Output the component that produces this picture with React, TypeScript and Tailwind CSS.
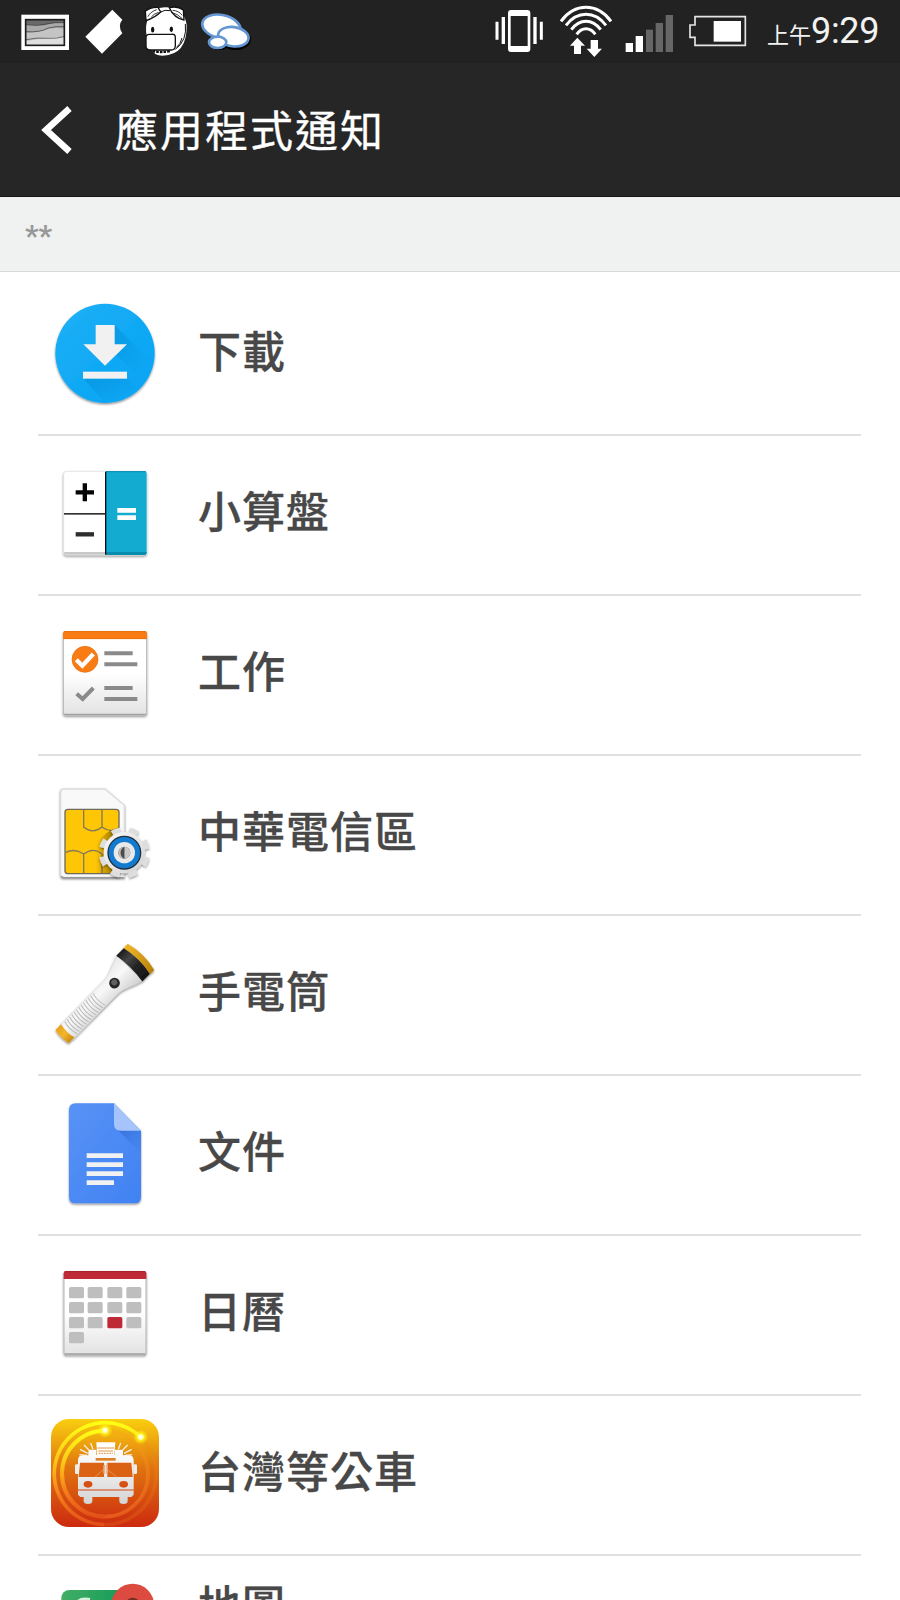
import React from 'react';

interface AppItem {
  id: number;
  name: string;
  icon: React.ReactNode;
  twoLine?: boolean;
}

const IconShadow = ({ id }: { id: string }) => (
  <filter id={id} x="-20%" y="-20%" width="140%" height="140%">
    <feDropShadow dx="0" dy="4" stdDeviation="3.500" floodColor="#000" floodOpacity="0.450" />
  </filter>
);

const DownloadIcon = () => (
  <svg viewBox="63 27 324 324" className="w-[108px] h-[108px] overflow-visible">
    <defs>
      <IconShadow id="dl-shadow" />
      <linearGradient id="dl-bg" x1="0" y1="0" x2="1" y2="1">
        <stop offset="0" stopColor="#1fb0f6" />
        <stop offset="1" stopColor="#03a3f4" />
      </linearGradient>
      <linearGradient id="dl-long" x1="0" y1="0" x2="1" y2="1">
        <stop offset="0" stopColor="#0288d1" stopOpacity="0.5" />
        <stop offset="0.800" stopColor="#0288d1" stopOpacity="0" />
      </linearGradient>
    </defs>
    <circle cx="225" cy="190" r="149" fill="url(#dl-bg)" filter="url(#dl-shadow)" />
    <path d="M254 105 L363 214 L340 270 L254 190Z" fill="url(#dl-long)" />
    <path d="M160 265 H291 L320 295 L225 339Z" fill="url(#dl-long)" />
    <path d="M197 105 H254 V163 H291 L225 227 L160 163 H197Z" fill="#f1f1f1" />
    <rect x="159" y="245" width="132" height="21" fill="#f1f1f1" />
  </svg>
);

const CalculatorIcon = () => (
  <svg viewBox="63 27 324 324" className="w-[108px] h-[108px] overflow-visible">
    <defs>
      <IconShadow id="calc-shadow" />
    </defs>
    <rect x="101" y="64" width="249" height="251" rx="8" fill="#fff" stroke="#ddd" strokeWidth="2" filter="url(#calc-shadow)" />
    <rect x="102" y="306" width="125" height="8" rx="3" fill="#c9c9c9" />
    <path d="M228 64 H342 Q350 64 350 72 V307 Q350 315 342 315 H228Z" fill="#13abcf" />
    <path d="M228 306 H350 Q350 315 342 315 H228Z" fill="#078cae" />
    <path d="M228 65 H348" stroke="#078cae" strokeWidth="3" />
    <rect x="225" y="65" width="4" height="249" fill="#111" />
    <rect x="102" y="189" width="124" height="5" fill="#333" />
    <path d="M137 127 H192 M164.500 100 V154" stroke="#050505" strokeWidth="13" />
    <path d="M137 253 H192" stroke="#2e2e2e" strokeWidth="13" />
    <path d="M262 181 H318 M262 203 H318" stroke="#fff" strokeWidth="14" />
  </svg>
);

const TasksIcon = () => (
  <svg viewBox="63 27 324 324" className="w-[108px] h-[108px] overflow-visible">
    <defs>
      <IconShadow id="task-shadow" />
      <linearGradient id="paper" x1="0" y1="0" x2="0" y2="1">
        <stop offset="0.500" stopColor="#fff" />
        <stop offset="1" stopColor="#e2e2e2" />
      </linearGradient>
    </defs>
    <rect x="100" y="65" width="250" height="250" rx="6" fill="url(#paper)" stroke="#b5b5b5" strokeWidth="3" filter="url(#task-shadow)" />
    <path d="M102 313 H348" stroke="#a2a2a2" strokeWidth="4" />
    <path d="M99 87 V70 Q99 63 106 63 H344 Q351 63 351 70 V87Z" fill="#f97b14" />
    <path d="M102 65 H348 M100 86 H350" stroke="#e56b08" strokeWidth="2" />
    <circle cx="165" cy="148" r="39" fill="#f97b14" stroke="#e56b08" strokeWidth="2" />
    <path d="M139 149 L157 167 L190 132" stroke="#fff" strokeWidth="13" fill="none" />
    <path d="M140 251 L158 267 L190 234" stroke="#8a8a8a" strokeWidth="12" fill="none" />
    <path d="M223 130 H308 M223 163 H322 M223 234 H308 M223 267 H322" stroke="#8a8a8a" strokeWidth="12" />
  </svg>
);

const SimIcon = () => (
  <svg viewBox="63 27 324 324" className="w-[108px] h-[108px] overflow-visible">
    <defs>
      <IconShadow id="sim-shadow" />
      <linearGradient id="sim-dark" x1="0" y1="0" x2="1" y2="0">
        <stop offset="0.200" stopColor="#4a3500" stopOpacity="0" />
        <stop offset="1" stopColor="#4a3500" stopOpacity="0.700" />
      </linearGradient>
      <linearGradient id="gear-fill" x1="0" y1="0" x2="1" y2="1">
        <stop offset="0" stopColor="#fafafa" />
        <stop offset="1" stopColor="#d2d2d2" />
      </linearGradient>
    </defs>
    <path d="M101 57 H225 L283 106 V322 H101 Q92 322 92 313 V66 Q92 57 101 57Z" fill="#f9f9f9" stroke="#dcdcdc" strokeWidth="4" filter="url(#sim-shadow)" />
    <path d="M94 318 Q95 323 102 323 H282" fill="none" stroke="#999" strokeWidth="4" />
    <rect x="105" y="118" width="162" height="193" rx="9" fill="#ffc605" stroke="#6e6a5d" strokeWidth="4" />
    <path d="M161 119 V171 Q188 194 216 171 V119 M216 171 Q235 185 262 181 M106 248 Q133 233 161 252 V310 M161 252 Q190 230 216 252 V310" fill="none" stroke="#84795b" strokeWidth="4" />
    <path d="M180 310 Q182 195 267 172 V302 Q267 310 259 310Z" fill="url(#sim-dark)" />
    <g filter="url(#sim-shadow)">
      <circle cx="283" cy="248" r="68" fill="none" stroke="#dedede" strokeWidth="17" strokeDasharray="26 27.400" transform="rotate(11.500 283 248)" />
      <circle cx="283" cy="248" r="62" fill="url(#gear-fill)" />
    </g>
    <circle cx="283" cy="248" r="49" fill="#127bd0" stroke="#212f3e" strokeWidth="4" />
    <circle cx="283" cy="248" r="32" fill="#e9e9e9" />
    <circle cx="283" cy="248" r="18" fill="#555" />
    <path d="M283 230 A18 18 0 0 1 283 266Z" fill="#c9c9c9" />
    <path d="M283 230 A18 18 0 0 0 283 266Z" fill="#bdbdbd" />
    <path d="M283 230 A20 20 0 0 1 283 266Z" fill="#4c4c4c" transform="rotate(180 283 248)" />
  </svg>
);

const ribs = [38, 48, 58, 68, 78, 88, 98, 108, 118, 128, 138, 148, 158];

const FlashlightIcon = () => (
  <svg viewBox="63 57 324 324" className="w-[108px] h-[108px] overflow-visible">
    <defs>
      <IconShadow id="torch-shadow" />
      <linearGradient id="torch-body" x1="0" y1="0" x2="0" y2="1">
        <stop offset="0" stopColor="#e6e6e6" />
        <stop offset="0.400" stopColor="#f8f8f8" />
        <stop offset="1" stopColor="#cfcfcf" />
      </linearGradient>
      <linearGradient id="torch-gold" x1="0" y1="0" x2="0" y2="1">
        <stop offset="0" stopColor="#f0b428" />
        <stop offset="0.250" stopColor="#e2aa25" />
        <stop offset="1" stopColor="#b98108" />
      </linearGradient>
      <linearGradient id="torch-tail" x1="0" y1="0" x2="0" y2="1">
        <stop offset="0" stopColor="#e5a51c" />
        <stop offset="0.500" stopColor="#f3b52c" />
        <stop offset="1" stopColor="#c98f14" />
      </linearGradient>
      <linearGradient id="torch-band" x1="0" y1="0" x2="0" y2="1">
        <stop offset="0" stopColor="#1c1c1c" />
        <stop offset="0.300" stopColor="#454545" />
        <stop offset="0.600" stopColor="#222" />
        <stop offset="1" stopColor="#161616" />
      </linearGradient>
    </defs>
    <g filter="url(#torch-shadow)">
      <g transform="translate(96 350) rotate(-45.300)">
        <path d="M18 -29 H208 C235 -29 255 -46 289 -54 V54 C255 46 235 29 208 29 H18Z" fill="url(#torch-body)" stroke="#bdbdbd" strokeWidth="1" />
        <path d="M0 -28 H25 Q17 0 25 28 H0 Q-6 0 0 -28Z" fill="url(#torch-tail)" />
        {ribs.map((x) => (
          <path key={x} d={`M${x} -26 Q${x - 8} 0 ${x} 26`} fill="none" stroke="#b8b8b8" strokeWidth="3" />
        ))}
        <path d="M287 -55 H320 Q332 0 320 55 H287 Q297 0 287 -55Z" fill="url(#torch-band)" />
        <path d="M319 -56 H337 Q352 0 337 56 H319 Q332 0 319 -56Z" fill="url(#torch-gold)" />
        <circle cx="225" cy="-1" r="16" fill="#262626" />
        <circle cx="226" cy="-3" r="9" fill="#606060" />
      </g>
    </g>
  </svg>
);

const DocsIcon = () => (
  <svg viewBox="63 57 324 324" className="w-[108px] h-[108px] overflow-visible">
    <defs>
      <IconShadow id="docs-shadow" />
      <linearGradient id="docs-bg" x1="0" y1="0" x2="1" y2="1">
        <stop offset="0" stopColor="#5892f6" />
        <stop offset="1" stopColor="#4082f2" />
      </linearGradient>
      <linearGradient id="docs-fold" x1="0" y1="0" x2="1" y2="1">
        <stop offset="0" stopColor="#2b66cf" stopOpacity="0.700" />
        <stop offset="1" stopColor="#3a78e0" stopOpacity="0.100" />
      </linearGradient>
    </defs>
    <path d="M137 70 H252 L333 152 V350 Q333 370 313 370 H137 Q117 370 117 350 V90 Q117 70 137 70Z" fill="url(#docs-bg)" filter="url(#docs-shadow)" />
    <path d="M260 147 L333 152 V218Z" fill="url(#docs-fold)" />
    <path d="M252 70 L333 152 H272 Q252 152 252 132Z" fill="#a6c4fb" />
    <path d="M170 227 H279 M170 254 H279 M170 281 H279 M170 308 H252" stroke="#f1f1f1" strokeWidth="14" />
  </svg>
);

const calendarDays = Array.from({ length: 13 }, (_, i) => ({
  x: [117, 173, 232, 289][i % 4],
  y: 111 + Math.floor(i / 4) * 45,
  active: i === 10,
}));

const CalendarIcon = () => (
  <svg viewBox="63 27 324 324" className="w-[108px] h-[108px] overflow-visible">
    <defs>
      <IconShadow id="cal-shadow" />
    </defs>
    <rect x="102" y="65" width="246" height="249" rx="6" fill="url(#paper)" stroke="#b5b5b5" strokeWidth="3" filter="url(#cal-shadow)" />
    <path d="M104 312 H346" stroke="#a2a2a2" strokeWidth="4" />
    <path d="M101 87 V70 Q101 63 108 63 H342 Q349 63 349 70 V87Z" fill="#bf2a37" />
    <path d="M104 65 H346" stroke="#a01c29" strokeWidth="2" />
    {calendarDays.map((day, i) => (
      <rect key={i} x={day.x} y={day.y} width="45" height="34" rx="5" fill={day.active ? '#bf2a37' : '#bebebe'} />
    ))}
  </svg>
);

const BusIcon = () => (
  <svg viewBox="63 57 324 324" className="w-[108px] h-[108px]">
    <defs>
      <linearGradient id="bus-bg" x1="0" y1="0" x2="0" y2="1">
        <stop offset="0" stopColor="#f9cf0f" />
        <stop offset="0.450" stopColor="#e0740f" />
        <stop offset="1" stopColor="#cc2a10" />
      </linearGradient>
      <linearGradient id="bus-ring" x1="0" y1="0" x2="0" y2="1">
        <stop offset="0" stopColor="#ffff14" />
        <stop offset="0.350" stopColor="#fccb18" />
        <stop offset="0.700" stopColor="#f4801c" />
        <stop offset="1" stopColor="#e25018" />
      </linearGradient>
      <linearGradient id="bus-fade" x1="0" y1="0" x2="0" y2="1">
        <stop offset="0" stopColor="#f9a21c" stopOpacity="0.300" />
        <stop offset="1" stopColor="#f06a20" stopOpacity="0.700" />
      </linearGradient>
      <linearGradient id="bus-body" x1="0" y1="0" x2="0" y2="1">
        <stop offset="0" stopColor="#fff" />
        <stop offset="1" stopColor="#d4d4d4" />
      </linearGradient>
      <radialGradient id="bus-glow">
        <stop offset="0" stopColor="#fff" />
        <stop offset="0.300" stopColor="#ffffc0" />
        <stop offset="0.450" stopColor="#ffff20" stopOpacity="0.800" />
        <stop offset="1" stopColor="#ffee10" stopOpacity="0" />
      </radialGradient>
    </defs>
    <rect x="63" y="57" width="324" height="324" rx="54" fill="url(#bus-bg)" />
    <circle cx="225" cy="221" r="129" fill="none" stroke="url(#bus-fade)" strokeWidth="11" />
    <path d="M332 111 A153 153 0 0 1 223 374" fill="none" stroke="#f08a1c" strokeOpacity="0.220" strokeWidth="11" />
    <path d="M332 111 A153 153 0 1 0 223 374" fill="none" stroke="url(#bus-ring)" strokeWidth="11" />
    <path d="M225 92 A129 129 0 0 0 225 350" fill="none" stroke="url(#bus-ring)" strokeWidth="12" />
    <circle cx="225" cy="91" r="23" fill="url(#bus-glow)" />
    <circle cx="332" cy="111" r="23" fill="url(#bus-glow)" />
    <path d="M150 148 L173 160 M162 135 L179 152 M182 129 L189 148 M148 164 L171 166 M305 148 L282 160 M293 135 L276 152 M272 129 L265 148 M306 164 L284 166" stroke="#f4eee2" strokeWidth="4" />
    <path d="M199 127 H256 L252 174 H202Z" fill="#fff" />
    <path d="M202 144 H252 M205 153 H249" stroke="#e09a40" strokeWidth="3" />
    <path d="M206 160 H248" stroke="#d98730" strokeWidth="3" strokeDasharray="5 3" />
    <path d="M175 172 V155 Q175 149 181 149 H199 V165 H254 V149 H273 Q279 149 279 155 V166 H296 Q311 166 311 182 V284 L304 291 H293 V303 Q293 312 281 312 Q268 312 268 303 V291 H187 V303 Q187 312 174 312 Q161 312 161 303 V291 H151 L144 284 V182 Q144 166 159 166 H175Z" fill="url(#bus-body)" />
    <rect x="135" y="193" width="11" height="29" rx="4" fill="#eee" />
    <rect x="310" y="193" width="11" height="29" rx="4" fill="#eee" />
    <path d="M197 178 H257" stroke="#dd8125" strokeWidth="8" />
    <path d="M150 188 H222 V231 H146Z M232 188 H304 L308 231 H232Z" fill="#db6212" />
    <path d="M195 231 L226 204 L260 231" fill="none" stroke="#eba77a" strokeWidth="2" />
    <rect x="220" y="194" width="13" height="28" rx="3" fill="#e9b38b" />
    <path d="M227 188 V232" stroke="#e8e8e8" strokeWidth="3" />
    <ellipse cx="174" cy="253" rx="13" ry="10" fill="#d84f12" />
    <ellipse cx="281" cy="253" rx="13" ry="10" fill="#d84f12" />
    <path d="M144 270 H311" stroke="#d64812" strokeWidth="3" />
  </svg>
);

const MapsIcon = () => (
  <svg viewBox="63 537 324 324" className="w-[108px] h-[108px]">
    <defs>
      <linearGradient id="map-bg" x1="0" y1="0" x2="1" y2="0">
        <stop offset="0" stopColor="#43ae66" />
        <stop offset="0.700" stopColor="#169c59" />
      </linearGradient>
    </defs>
    <rect x="94" y="570" width="260" height="262" rx="24" fill="url(#map-bg)" />
    <path d="M180 598 Q148 592 137 612 Q132 630 154 640 Q180 640 180 618 H160" fill="none" stroke="#d8efe0" strokeWidth="8" />
    <path d="M308 551 A64 64 0 0 1 372 615 Q372 660 308 740 Q244 660 244 615 A64 64 0 0 1 308 551Z" fill="#dc4b3f" />
    <circle cx="308" cy="615" r="22" fill="#7b2d25" />
  </svg>
);

const apps: AppItem[] = [
  { id: 1, name: '下載', icon: <DownloadIcon /> },
  { id: 2, name: '小算盤', icon: <CalculatorIcon /> },
  { id: 3, name: '工作', icon: <TasksIcon /> },
  { id: 4, name: '中華電信區', icon: <SimIcon /> },
  { id: 5, name: '手電筒', icon: <FlashlightIcon /> },
  { id: 6, name: '文件', icon: <DocsIcon /> },
  { id: 7, name: '日曆', icon: <CalendarIcon /> },
  { id: 8, name: '台灣等公車', icon: <BusIcon /> },
  { id: 9, name: '地圖', icon: <MapsIcon />, twoLine: true },
];

const NotificationIcons = () => (
  <div className="flex gap-3.5">
    <svg viewBox="60 0 150 186" className="w-[50px] h-[62px]">
      <rect x="64" y="44" width="143" height="106" fill="#fff" />
      <rect x="77" y="59" width="116" height="77" fill="#dedede" />
      <path d="M77 59 H193 V90 Q160 88 130 98 L77 100Z" fill="#a9a9a9" />
      <path d="M77 59 H193 V68 Q160 66 130 76 L77 74Z" fill="#6a6a6a" />
      <path d="M77 98 Q110 100 135 90 Q160 80 193 86 V110 Q130 112 77 124Z" fill="#c4c4c4" />
      <path d="M78 74 Q110 80 140 72 Q165 66 192 68 M78 95 Q120 98 145 84 Q170 78 192 80 M78 119 Q110 112 145 115 Q170 116 192 110" fill="none" stroke="#333" strokeWidth="2" />
      <rect x="77" y="59" width="116" height="77" fill="none" stroke="#1c1c1c" strokeWidth="5" />
    </svg>
    <svg viewBox="252 0 138 186" className="w-[46px] h-[62px]">
      <path d="M337 29 L367 59 Q352 77 367 100 L306 161 L256 110Z" fill="#fff" />
    </svg>
    <svg viewBox="432 0 126 186" className="w-[42px] h-[62px] overflow-visible">
      <path d="M446 50 Q455 24 495 22 Q554 22 560 76 Q562 165 488 167 Q462 167 456 150 Q438 142 440 108 Q434 75 446 50Z" fill="#fff" />
      <path d="M436 34 Q450 21 474 22 L482 36 Q466 52 438 62Z M508 23 Q532 17 550 30 L552 60 Q522 54 508 23Z" fill="#fff" stroke="#111" strokeWidth="4" />
      <path d="M444 50 Q450 36 470 29 M454 51 Q460 42 476 37 M518 31 Q536 32 547 46 M514 37 Q534 42 547 56" fill="none" stroke="#111" strokeWidth="2.500" />
      <path d="M482 36 Q494 28 511 32" fill="none" stroke="#111" strokeWidth="3" />
      <path d="M556 72 Q562 122 526 148 M546 114 Q542 132 530 142" fill="none" stroke="#111" strokeWidth="3" />
      <ellipse cx="458" cy="89" rx="5" ry="8.500" fill="#111" />
      <ellipse cx="514" cy="88" rx="5" ry="8.500" fill="#111" />
      <path d="M448 103 H515 Q526 101 526 113 V138 Q525 150 514 150 H449 Q438 149 438 139 V113 Q438 103 448 103Z" fill="#fff" stroke="#111" strokeWidth="4" />
      <path d="M458 153 Q480 159 510 153" fill="none" stroke="#111" strokeWidth="7" strokeDasharray="8 3" />
    </svg>
    <svg viewBox="600 0 162 186" className="w-[54px] h-[62px]">
      <g fill="#000">
        <ellipse cx="706" cy="118" rx="47" ry="32" />
        <ellipse cx="658" cy="131" rx="28" ry="19" />
      </g>
      <g fill="#fff" stroke="#6496d2" strokeWidth="8">
        <ellipse cx="664" cy="80" rx="58" ry="35" transform="rotate(12 664 80)" />
        <ellipse cx="700" cy="110" rx="46" ry="29" transform="rotate(8 700 110)" />
        <ellipse cx="653" cy="127" rx="26" ry="17" />
      </g>
    </svg>
  </div>
);

const SystemIcons = () => (
  <div className="flex w-[405px]">
    <svg viewBox="45 0 150 186" className="w-[50px] h-[62px] mr-3.5">
      <rect x="84" y="30" width="67" height="126" rx="9" fill="#fff" />
      <rect x="92" y="48" width="51" height="90" fill="#222" />
      <path d="M70 51 V132 M165 51 V132" stroke="#fff" strokeWidth="10" />
      <path d="M51 65 V119 M184 65 V119" stroke="#fff" strokeWidth="9" />
    </svg>
    <svg viewBox="237 0 162 186" className="w-[54px] h-[62px] mr-3">
      <g fill="none" stroke="#fff" strokeWidth="9">
        <path d="M243 64 Q274 22 318 22 Q362 22 393 64" />
        <path d="M258 76 Q284 43 318 43 Q352 43 378 76" />
        <path d="M274 89 Q293 64 318 64 Q343 64 362 89" />
        <path d="M290 103 Q302 86 318 86 Q334 86 346 103" />
      </g>
      <path d="M292 113 L315 137 H303 V162 H282 V137 H270Z M332 120 H354 V146 H366 L343 171 L320 146 H332Z" fill="#fff" />
    </svg>
    <svg viewBox="435 0 144 186" className="w-[48px] h-[62px] mr-4">
      <rect x="437" y="129" width="22" height="27" fill="#fff" />
      <rect x="467" y="108" width="22" height="48" fill="#fff" />
      <rect x="498" y="89" width="21" height="67" fill="#666" />
      <rect x="527" y="69" width="22" height="87" fill="#666" />
      <rect x="557" y="45" width="22" height="111" fill="#666" />
    </svg>
    <svg viewBox="627 0 174 186" className="w-[58px] h-[62px] mr-5">
      <path d="M645 50 H796 V136 H645 V112 H630 V75 H645Z" fill="none" stroke="#e5e5e5" strokeWidth="5" />
      <rect x="701" y="63" width="82" height="62" fill="#fff" />
    </svg>
    <div className="flex items-baseline text-[#f2f2f2] whitespace-nowrap leading-[62px]">
      <span className="text-[22px] font-['Noto_Sans_CJK_TC',sans-serif]">上午</span>
      <span className="text-[36px] tracking-[-0.300px] font-[Roboto,sans-serif]">9:29</span>
    </div>
  </div>
);

const AppRow = ({ app }: { app: AppItem }) => (
  <li className="flex items-center h-40 ml-[38px] mr-[39px] pl-[13px] pb-1 border-b-2 border-[#e0e0e0]">
    <div className="shrink-0 mr-[39px]">{app.icon}</div>
    <span
      className={`text-[43px] leading-[60px] tracking-[1px] font-medium text-[#484848] [-webkit-text-stroke:0.300px_#484848] ${
        app.twoLine ? 'pb-[60px]' : 'pb-2'
      }`}
    >
      {app.name}
    </span>
  </li>
);

const App = () => {
  return (
    <div className="w-[900px] h-[1600px] overflow-hidden bg-white font-['Noto_Sans_CJK_TC',sans-serif]">
      <div className="flex justify-between h-[63px] pl-5 bg-[#222222]">
        <NotificationIcons />
        <SystemIcons />
      </div>

      <header className="flex items-center h-[134px] pl-[41px] bg-[#262626] border-b border-[#161616]">
        <svg viewBox="0 0 31 48" className="w-[31px] h-12">
          <path d="M28.500 2.500 L5 24 L28.500 45.500" fill="none" stroke="#fff" strokeWidth="6.500" />
        </svg>
        <h1 className="ml-[43px] pb-[3px] text-[43px] leading-[60px] tracking-[2px] text-white [-webkit-text-stroke:0.300px_white]">
          應用程式通知
        </h1>
      </header>

      <div className="flex items-center h-[75px] pl-[25px] bg-[#f0f2f1] border-b border-[#d8dad9]">
        <span className="pt-[3px] text-[30px] leading-10 font-bold font-[Roboto,sans-serif] text-[#999]">**</span>
      </div>

      <ul className="pt-1">
        {apps.map((app) => (
          <AppRow key={app.id} app={app} />
        ))}
      </ul>
    </div>
  );
};

export default App;
